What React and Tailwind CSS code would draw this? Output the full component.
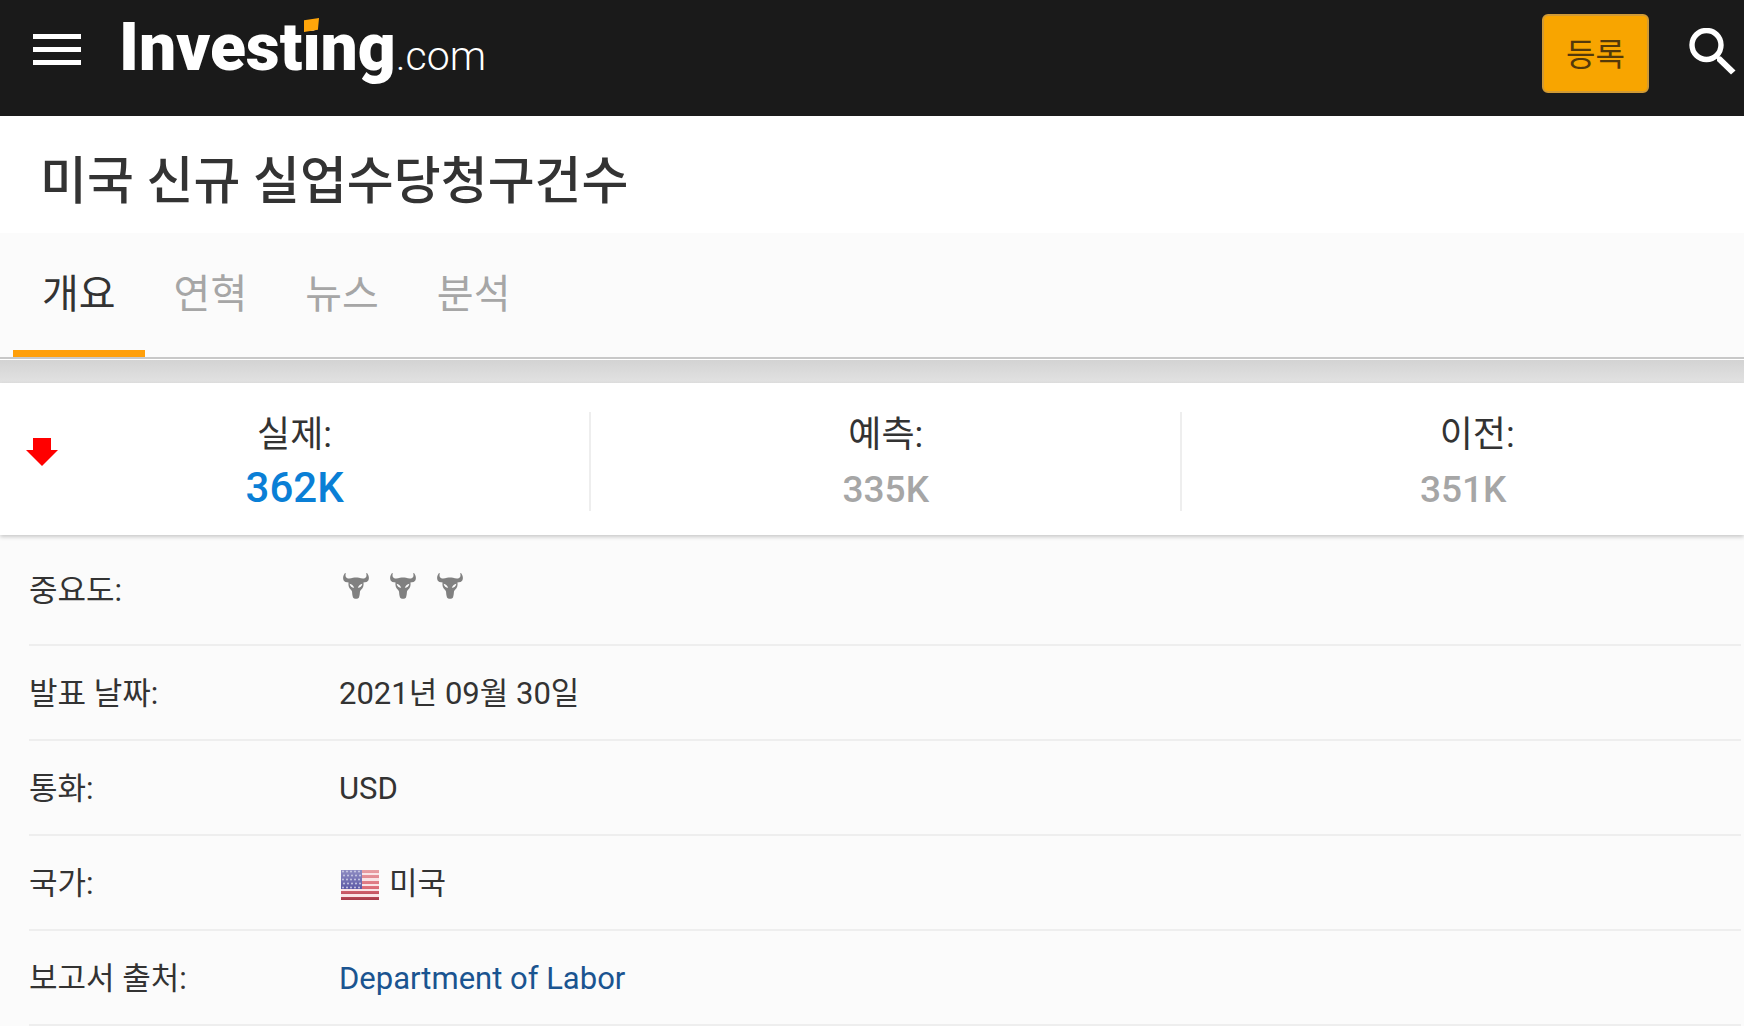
import { useState } from 'react'

const tabs = ['개요', '연혁', '뉴스', '분석']

function BullIcon() {
  return (
    <svg viewBox="0 0 26 26" className="w-[26px] h-[26px]" aria-hidden="true">
      <path
        fill="#808080"
        fillRule="evenodd"
        d="M2 0 C-.6 3 -.6 8 2.4 9 C3.600 9.400 4.700 9.300 5.600 9.400 C5.200 11.500 5.500 13.500 6.400 15 C7.300 16.400 8.800 17.200 9 18.600 C9.300 20.500 9.200 22.500 10 24.400 C10.800 26.300 15.200 26.300 16 24.400 C16.800 22.500 16.700 20.500 17 18.600 C17.200 17.200 18.700 16.400 19.600 15 C20.500 13.500 20.800 11.500 20.400 9.400 C21.300 9.300 22.400 9.400 23.600 9 C26.600 8 26.600 3 24 0 L23.200 .3 C23.900 3 23.400 5 21 5.400 C19 5.700 17.800 5.200 16 4.800 C14 4.400 12 4.400 10 4.800 C8.200 5.200 7 5.700 5 5.400 C2.600 5 2.100 3 2.800 .3 Z M6.600 10.800 C8.600 11.300 10.300 12.600 11.200 14.700 C9 14.800 7.200 13.500 6.600 10.800 Z M19.400 10.800 C17.400 11.300 15.700 12.600 14.800 14.700 C17 14.800 18.800 13.500 19.400 10.800 Z"
      />
    </svg>
  )
}

function UsFlag() {
  return (
    <svg viewBox="0 0 38 30" className="w-[38px] h-[30px]" aria-hidden="true">
      <defs>
        <linearGradient id="stripe" x1="0" y1="0" x2="0" y2="30" gradientUnits="userSpaceOnUse">
          <stop offset="0" stopColor="#e8a0a5" />
          <stop offset="0.6" stopColor="#dc6c78" />
          <stop offset="1" stopColor="#a83a48" />
        </linearGradient>
        <linearGradient id="canton" x1="0" y1="0" x2="0" y2="1">
          <stop offset="0" stopColor="#8f8dc2" />
          <stop offset="1" stopColor="#5c59a6" />
        </linearGradient>
      </defs>
      <rect width="38" height="30" fill="#fae4e6" />
      {[0, 5, 11, 16, 21, 27].map((y) => (
        <rect key={y} y={y} width="38" height="3" fill="url(#stripe)" />
      ))}
      <rect width="21" height="19" fill="url(#canton)" />
      {[2, 6, 10, 14, 18].map((y, row) =>
        [2, 6, 10, 14, 18].map((x) => (
          <circle key={`${x}-${y}`} cx={x + (row % 2)} cy={y - 0.5} r="1" fill="#c9c8e4" />
        ))
      )}
    </svg>
  )
}

function Header() {
  return (
    <header className="flex items-start h-[116px] bg-[#1a1a1a] pl-[33px] pr-2">
      {/* Menu */}
      <button aria-label="메뉴" className="flex flex-col gap-2 mt-[34px] w-12">
        <span className="block w-full h-[5px] bg-white" />
        <span className="block w-full h-[5px] bg-white" />
        <span className="block w-full h-[5px] bg-white" />
      </button>

      {/* Logo */}
      <a href="#" className="flex items-baseline ml-[38px] mt-3 text-white leading-[72px] whitespace-nowrap">
        <span className="text-[66px] font-black">
          Invest
          <span className="relative">
            i
            <svg viewBox="0 0 14 13" className="absolute left-[2px] top-[9px] w-[15px] h-[14px]" aria-hidden="true">
              <path d="M0 2 L14 0 L13 11 L0 13 Z" fill="#ffa50a" />
            </svg>
          </span>
          ng
        </span>
        <span className="text-[41px] font-light">.com</span>
      </a>

      <div className="flex-1" />

      <button className="w-[107px] h-[79px] mt-[14px] pt-[2px] rounded-md border-2 border-[#d09a35] bg-[#f8a500] text-[32px] text-[#54390a]">
        등록
      </button>
      <button aria-label="검색" className="ml-[39px] mt-7">
        <svg viewBox="0 0 48 48" className="w-12 h-12" fill="none" stroke="#fff" aria-hidden="true">
          <circle cx="18.500" cy="17" r="14.500" strokeWidth="5.400" />
          <path d="M29 28 L33 28.500 L47.500 42.500 L43 46.500 L29 33 Z" fill="#fff" stroke="none" />
        </svg>
      </button>
    </header>
  )
}

function Stats() {
  return (
    <section className="relative flex pt-[29px] pb-6 bg-white shadow-[0_2px_4px_rgba(0,0,0,0.2)] text-center">
      <svg viewBox="0 0 32 28" className="absolute left-[26px] top-[55px] w-8 h-7" role="img" aria-label="하락">
        <path d="M7 0 H25 V12 H32 L16 28 L0 12 H7 Z" fill="#f00" />
      </svg>
      <div className="w-[33.9%] h-[99px] border-r-2 border-[#eee]">
        <div className="text-[36px] leading-[46px]">실제:</div>
        <div className="text-[42px] leading-[60px] font-medium text-[#0a7fd6]">362K</div>
      </div>
      <div className="w-[33.9%] h-[99px] border-r-2 border-[#eee]">
        <div className="text-[36px] leading-[46px]">예측:</div>
        <div className="text-[37px] leading-[64px] font-medium text-[#a6a6a6]">335K</div>
      </div>
      <div className="flex-1 h-[99px]">
        <div className="pl-7 text-[36px] leading-[46px]">이전:</div>
        <div className="text-[37px] leading-[64px] font-medium text-[#a6a6a6]">351K</div>
      </div>
    </section>
  )
}

function Row({ label, children, tall }) {
  return (
    <div className={`flex items-center pt-1 border-b-2 border-[#eee] ${tall ? 'h-[111px]' : 'h-[95px]'}`}>
      <dt className="w-[310px]">{label}</dt>
      <dd className="flex items-center">{children}</dd>
    </div>
  )
}

export default function App() {
  const [active, setActive] = useState('개요')

  return (
    <div className="bg-white text-[#333] font-['Roboto','Noto_Sans_CJK_KR',sans-serif]">
      <Header />

      <h1 className="h-[117px] px-10 text-[51px] leading-[132px] font-medium">미국 신규 실업수당청구건수</h1>

      {/* Tabs */}
      <nav className="flex h-[126px] pl-[13px] bg-[#fbfbfb] border-b-2 border-[#c8c8c8]">
        {tabs.map((tab) => (
          <button
            key={tab}
            onClick={() => setActive(tab)}
            className={`px-[29px] pt-[7px] text-[40px] border-b-[7px] ${
              tab === active ? 'border-[#ff9f0a] text-[#333]' : 'border-transparent text-[#a6a6a6]'
            }`}
          >
            {tab}
          </button>
        ))}
      </nav>
      <div className="h-[23px] mt-px bg-linear-to-b from-[#d3d3d3] to-[#e2e2e2]" />

      <Stats />

      {/* Details */}
      <dl className="pl-[29px] pr-[3px] bg-[#fbfbfb] text-[31px]">
        <Row label="중요도:" tall>
          <span className="flex gap-[21px] pl-1 pb-3" role="img" aria-label="중요도 높음">
            <BullIcon />
            <BullIcon />
            <BullIcon />
          </span>
        </Row>
        <Row label="발표 날짜:">2021년 09월 30일</Row>
        <Row label="통화:">USD</Row>
        <Row label="국가:">
          <span className="pl-[2px] pr-[10px]">
            <UsFlag />
          </span>
          미국
        </Row>
        <Row label="보고서 출처:">
          <a href="#" className="text-[#1a5490]">Department of Labor</a>
        </Row>
      </dl>
    </div>
  )
}
